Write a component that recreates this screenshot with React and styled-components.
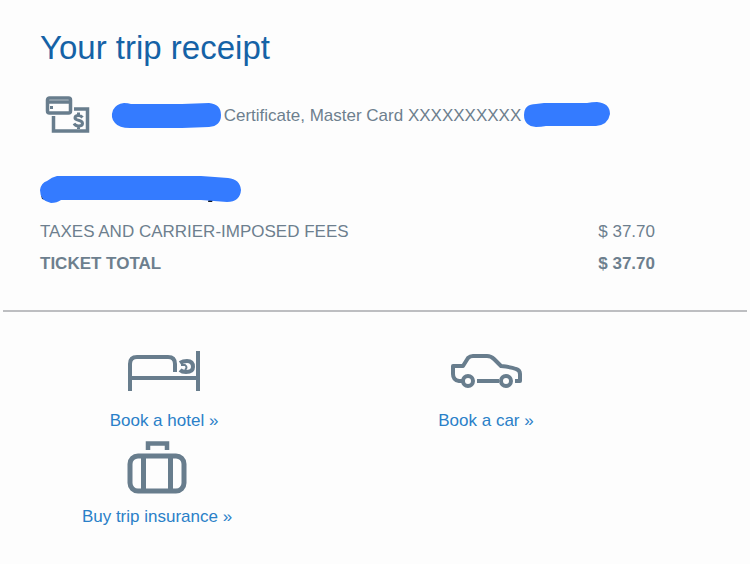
import React from "react";
import styled, { createGlobalStyle } from "styled-components";

const GlobalStyle = createGlobalStyle`
  * { box-sizing: border-box; }
  body {
    margin: 0;
    background: #fdfdfd;
    color: #6d7f8e;
    font-family: "Liberation Sans", Arial, Helvetica, sans-serif;
    font-size: 17px;
    line-height: 24px;
  }
`;

const Page = styled.main`
  padding: 0 3px;
`;

const Receipt = styled.section`
  padding: 28px 92px 30px 37px;
  border-bottom: 2px solid #bdbec1;
`;

const Title = styled.h1`
  margin: 0;
  color: #1562a6;
  font-size: 33px;
  font-weight: 400;
  line-height: 40px;
`;

const Payment = styled.div`
  display: flex;
  align-items: center;
  height: 40px;
  margin-top: 28px;
  padding-left: 4px;
`;

const PaymentText = styled.span`
  flex: none;
  min-width: 303px;
  text-align: center;
  white-space: nowrap;
`;

const Drawing = styled.svg`
  display: block;
  flex: none;
  overflow: visible;
`;

const CardIcon = styled(Drawing)`
  margin-right: 21px;
`;

const Passenger = styled.div`
  margin-top: 40px;
`;

const Fees = styled.table`
  width: 100%;
  margin-top: 12px;
  border-collapse: collapse;
`;

const FeeRow = styled.tr`
  height: 32px;
  font-weight: ${(p) => (p.$total ? 700 : 400)};
`;

const FeeName = styled.th`
  padding: 0;
  font-weight: inherit;
  text-align: left;
`;

const FeeAmount = styled.td`
  padding: 0;
  text-align: right;
`;

const Offers = styled.nav`
  display: grid;
  grid-template-columns: 1fr 1fr;
  row-gap: 7px;
  padding: 38px 100px 32px 0;
`;

const Offer = styled.a`
  display: flex;
  flex-direction: column;
  align-items: center;
  padding-right: ${(p) => (p.$narrow ? 14 : 0)}px;
  color: #2a80c8;
  text-decoration: none;

  &:hover { text-decoration: underline; }
`;

const OfferText = styled.span`
  margin-top: ${(p) => (p.$tight ? 11 : 17)}px;
`;

const ink = "#687d8d";
const marker = "#347bff";

function HotelIcon() {
  return (
    <Drawing width="74" height="42" viewBox="0 0 74 42" fill="none" stroke={ink} strokeWidth="4" aria-hidden="true">
      <path d="M3 41V14Q3 7 10 7H41Q48 7 48 14V22" />
      <path d="M3 28H71M71 1V41" />
      <path d="M53 13Q56 11 60 11Q66 11 66 17Q66 22 59 22Q55 22 53 20" />
      <path d="M54 15H58Q61 17 58 20" strokeWidth="2" />
    </Drawing>
  );
}

function CarIcon() {
  return (
    <Drawing width="74" height="42" viewBox="0 0 74 42" fill="none" stroke={ink} strokeWidth="4" strokeLinejoin="round" aria-hidden="true">
      <path d="M13 31H10Q4 30 4 24V16H14L19 8Q21 6 24 6H38Q42 6 45 9L52 16Q62 17 67 19Q71 20 71 24V31H66" />
      <path d="M28 31H50" />
      <circle cx="19" cy="31" r="5" />
      <circle cx="57" cy="31" r="5" />
    </Drawing>
  );
}

function SuitcaseIcon() {
  return (
    <Drawing width="60" height="54" viewBox="0 0 60 54" fill="none" stroke={ink} strokeWidth="5" aria-hidden="true">
      <path d="M21 10V3.5H40V10" strokeWidth="4.5" />
      <rect x="3" y="16" width="54" height="35" rx="8" />
      <path d="M16.5 16V51M43.5 16V51" />
    </Drawing>
  );
}

function PaymentIcon() {
  return (
    <CardIcon width="47" height="40" viewBox="0 0 47 40" fill="none" stroke={ink} strokeWidth="3.5" aria-hidden="true">
      <rect x="3.5" y="2" width="23" height="15" rx="2" />
      <path d="M3 6H27" />
      <path d="M6 11.5H9" strokeWidth="3" />
      <path d="M9.5 20V35H43.5V13H30" />
      <path d="M38.5 21.5Q37 19.5 34.5 19.5Q31 19.5 31 22Q31 23.5 34.5 24.2Q38.5 25 38.5 27.5Q38.5 30 34.5 30Q31.5 30 30 27.5M34.5 16.5V20M34.5 30V33" strokeWidth="3" />
    </CardIcon>
  );
}

export default function App() {
  return (
    <>
      <GlobalStyle />
      <Page>
        <Receipt>
          <Title>Your trip receipt</Title>
          <Payment>
            <PaymentIcon />
            <Drawing width="109" height="26" viewBox="0 0 109 26" fill={marker} aria-hidden="true">
              <path d="M12 0Q16 0 19 1H70L97 0Q109 1 109 12Q109 23 97 24L70 25H18Q7 25 3 20Q-2 15 1 7Q4 1 12 0Z" />
            </Drawing>
            <PaymentText>Certificate, Master Card XXXXXXXXXX</PaymentText>
            <Drawing width="86" height="30" viewBox="0 0 86 30" fill={marker} aria-hidden="true">
              <path d="M20 2H63Q68 1 73 1Q86 2 86 13Q84 24 72 25H22Q17 26 12 26Q0 25 0 14Q0 3 12 3Z" />
            </Drawing>
          </Payment>
          <Passenger>
            <Drawing width="201" height="28" viewBox="0 0 201 28" aria-hidden="true">
              <path d="M1 19L6 24L2 23Z M169 22H174L172 26H168Z" fill="#171b22" />
              <path d="M17 0H161Q175 1 188 2Q200 3 201 14Q200 26 187 26L161 24H21Q17 27 11 27Q0 25 0 14Q1 7 7 5Q12 1 17 0Z" fill={marker} />
            </Drawing>
          </Passenger>
          <Fees>
            <tbody>
              <FeeRow>
                <FeeName scope="row">TAXES AND CARRIER-IMPOSED FEES</FeeName>
                <FeeAmount>$ 37.70</FeeAmount>
              </FeeRow>
              <FeeRow $total>
                <FeeName scope="row">TICKET TOTAL</FeeName>
                <FeeAmount>$ 37.70</FeeAmount>
              </FeeRow>
            </tbody>
          </Fees>
        </Receipt>
        <Offers aria-label="Travel extras">
          <Offer href="#hotel">
            <HotelIcon />
            <OfferText>Book a hotel »</OfferText>
          </Offer>
          <Offer href="#car">
            <CarIcon />
            <OfferText>Book a car »</OfferText>
          </Offer>
          <Offer href="#insurance" $narrow>
            <SuitcaseIcon />
            <OfferText $tight>Buy trip insurance »</OfferText>
          </Offer>
        </Offers>
      </Page>
    </>
  );
}
